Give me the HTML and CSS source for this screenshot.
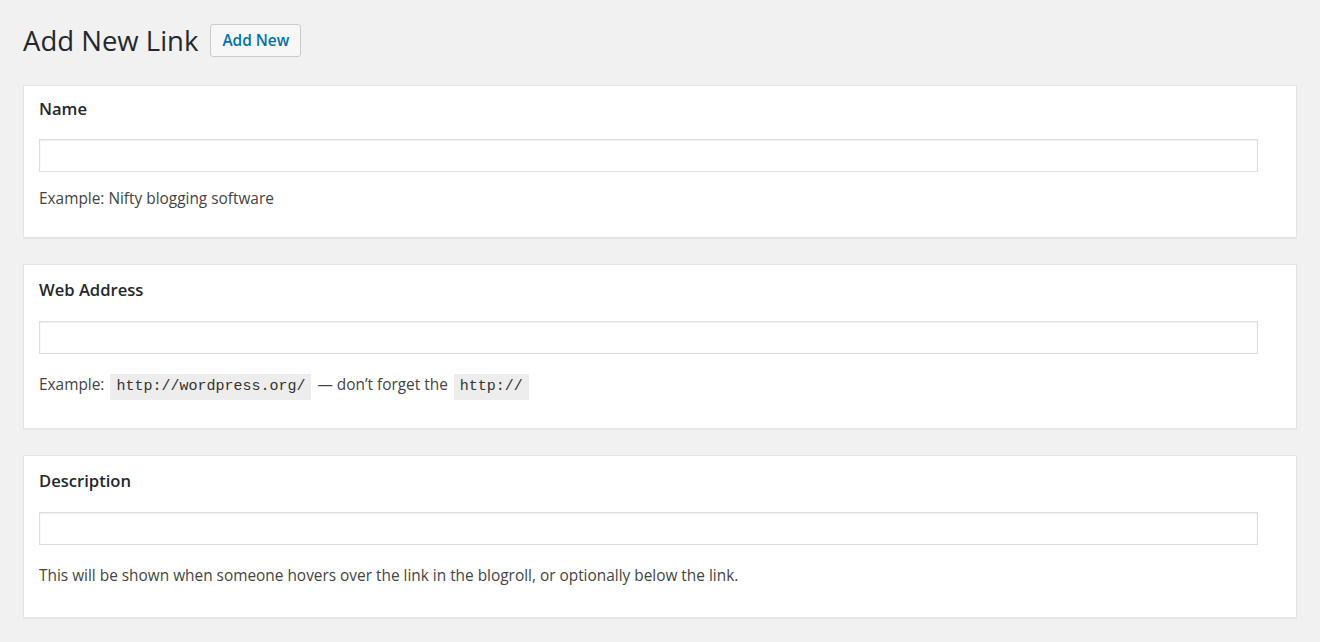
FILE: index.html
```html
<!DOCTYPE html>
<html lang="en">
<head>
<meta charset="utf-8">
<title>Add New Link</title>
<link rel="stylesheet" href="styles.css">
</head>
<body>
<div class="wrap">
  <div class="page-header">
    <h1 class="page-title">Add New Link</h1>
    <a class="button" href="#">Add New</a>
  </div>

  <div class="card card--first">
    <h2 class="card-title">Name</h2>
    <input class="field" type="text">
    <p class="hint">Example: Nifty blogging software</p>
  </div>

  <div class="card">
    <h2 class="card-title">Web Address</h2>
    <input class="field" type="text">
    <p class="hint">Example: <code>http://wordpress.org/</code> — don’t forget the <code>http://</code></p>
  </div>

  <div class="card">
    <h2 class="card-title">Description</h2>
    <input class="field" type="text">
    <p class="hint">This will be shown when someone hovers over the link in the blogroll, or optionally below the link.</p>
  </div>
</div>
</body>
</html>
```

FILE: styles.css
```css
* { box-sizing: border-box; }

html, body {
  margin: 0;
  padding: 0;
  background: #f1f1f1;
}

body {
  font-family: "Open Sans", "Noto Sans", sans-serif;
  font-size: 15.4px;
  color: #444;
}

.wrap {
  padding: 24px 23px 0 23px;
}

.page-header {
  display: flex;
  align-items: center;
  gap: 12px;
  height: 33px;
  margin-bottom: 28px;
}

.page-title {
  margin: 0;
  font-size: 27.5px;
  font-weight: 400;
  line-height: 33px;
  color: #23282d;
}

.button {
  display: inline-flex;
  align-items: center;
  height: 33px;
  padding: 0 11px;
  border: 1px solid #ccc;
  border-radius: 3px;
  background: #f7f7f7;
  color: #0073aa;
  font-size: 15.4px;
  font-weight: 600;
  text-decoration: none;
}

.card {
  background: #fff;
  border: 1px solid #e5e5e5;
  box-shadow: 0 1px 1px rgba(0, 0, 0, 0.04);
  padding: 14px 15px 30px 15px;
  margin-bottom: 26px;
}

.card--first {
  padding-top: 12px;
  padding-bottom: 27px;
}

.card-title {
  margin: 0;
  font-size: 16.6px;
  font-weight: 600;
  line-height: 22px;
  color: #23282d;
}

.field {
  display: block;
  width: calc(100% - 23px);
  height: 33px;
  margin: 20px 0 0 0;
  border: 1px solid #ddd;
  box-shadow: inset 0 1px 2px rgba(0, 0, 0, 0.07);
  background: #fff;
  font: inherit;
}

.card--first .field {
  margin-top: 19px;
}

.hint {
  margin: 20px 0 0 0;
  line-height: 22px;
}

.card--first .hint {
  margin-top: 16px;
}

code {
  font-family: "Liberation Mono", "DejaVu Sans Mono", monospace;
  font-size: 15px;
  padding: 4px 6px 5px 6px;
  margin: 0 2px;
  background: rgba(0, 0, 0, 0.07);
  color: #333;
}
```
